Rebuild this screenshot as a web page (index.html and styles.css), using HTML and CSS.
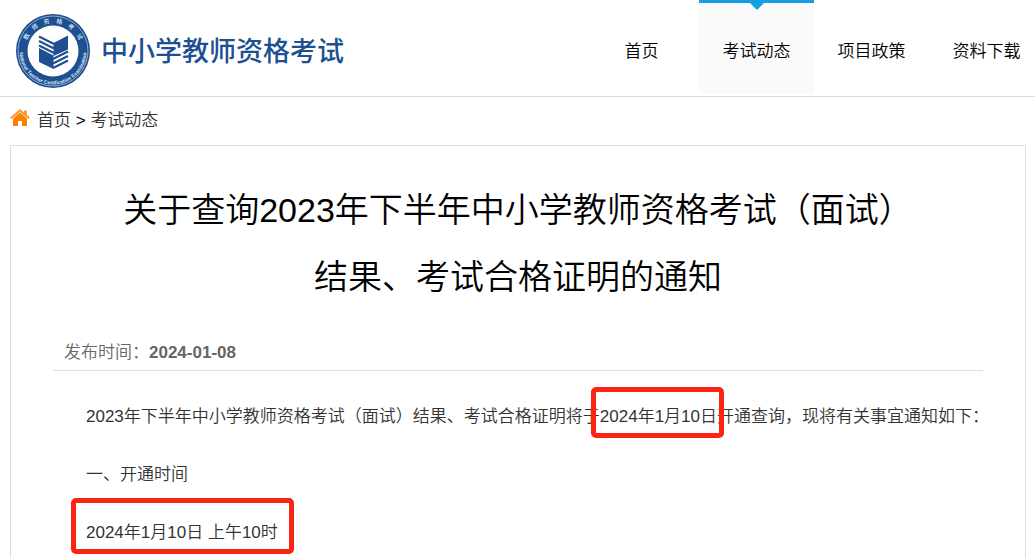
FILE: index.html
```html
<!DOCTYPE html>
<html lang="zh-CN">
<head>
    <meta charset="UTF-8">
    <meta name="viewport" content="width=device-width, initial-scale=1.0">
    <title>中小学教师资格考试</title>
    <link rel="stylesheet" href="styles.css">
</head>
<body>
    <header class="header">
        <a class="logo" href="#">
            <svg class="logo-mark" viewBox="0 0 76 76" aria-hidden="true">
                <defs>
                    <path id="arc-top" d="M10 38a28 28 0 0 1 56 0"/>
                    <path id="arc-bottom" d="M4.500 38a33.500 33.500 0 0 0 67 0"/>
                </defs>
                <circle cx="38" cy="38" r="37" fill="#1d4f91"/>
                <circle cx="38" cy="38" r="35" fill="none" stroke="#a9c0dc" stroke-width="0.8"/>
                <circle cx="38" cy="38" r="25.500" fill="#fff"/>
                <text class="ring-cn"><textPath href="#arc-top" startOffset="50%" text-anchor="middle">教&emsp;师&emsp;资&emsp;格&emsp;考&emsp;试</textPath></text>
                <text class="ring-en"><textPath href="#arc-bottom" startOffset="50%" text-anchor="middle">National Teacher Certification Examination</textPath></text>
                <path fill="#1d4f91" d="M38.500 30 53 22.500v14L38.500 43zM24 35l14.500 7.500V56L24 49z"/>
                <path fill="none" stroke="#1d4f91" stroke-width="2" d="M24 23.500l15 7.500M24 28l15 7.500M24 32.500l15 7.500M38 46l15-7.500M38 50.500l15-7.500M38 55l15-7.500"/>
            </svg>
            <span class="logo-text">中小学教师资格考试</span>
        </a>
        <nav class="nav">
            <a href="#">首页</a>
            <a href="#" class="active">考试动态</a>
            <a href="#">项目政策</a>
            <a href="#">资料下载</a>
        </nav>
    </header>

    <div class="crumbs">
        <svg class="home-icon" viewBox="0 0 20 18" aria-hidden="true">
            <path fill="#ff9a3c" d="M10 0 0 8.500l1.500 1.500L10 3l8.500 7L20 8.500 17 6V1.500h-3v2z"/>
            <path fill="#ff8000" d="M10 3.500 3 9.500V17h5v-5h4v5h5V9.500z"/>
        </svg>
        <div><a href="#">首页</a> &gt; <a href="#">考试动态</a></div>
    </div>

    <main class="article">
        <div class="article-head">
            <h1>关于查询2023年下半年中小学教师资格考试（面试）<br>结果、考试合格证明的通知</h1>
            <p class="date">发布时间：<strong>2024-01-08</strong></p>
        </div>
        <div class="article-body">
            <p>2023年下半年中小学教师资格考试（面试）结果、考试合格证明将于<span class="mark">2024年1月10日</span>开通查询，现将有关事宜通知如下：</p>
            <p>一、开通时间</p>
            <p><span class="mark mark-wide">2024年1月10日 上午10时</span></p>
        </div>
    </main>
</body>
</html>
```

FILE: styles.css
```css
* {
    box-sizing: border-box;
}
body {
    margin: 0;
    min-height: 100vh;
    display: flex;
    flex-direction: column;
    font-family: "Liberation Sans", "Noto Sans CJK SC", sans-serif;
    font-size: 17px;
    font-weight: 350;
    color: #000;
    background-color: #fff;
}
a {
    color: inherit;
    text-decoration: none;
}
h1, p {
    margin: 0;
}
strong {
    font-weight: 700;
}

/* header */
.header {
    display: flex;
    justify-content: space-between;
    height: 97px;
    border-bottom: 1px solid #ddd;
    overflow: hidden;
}
.logo {
    display: flex;
    align-items: center;
    gap: 10px;
    height: 102px;
    padding-left: 15px;
}
.logo-mark {
    width: 76px;
    height: 76px;
}
.ring-cn {
    font-size: 6px;
    font-weight: 500;
    fill: #dfe9f5;
}
.ring-en {
    font-size: 5px;
    font-weight: bold;
    fill: #dfe9f5;
}
.logo-text {
    padding-bottom: 4px;
    font-size: 27px;
    font-weight: 500;
    color: #1d4f91;
    white-space: nowrap;
}
.nav {
    display: flex;
    margin-right: -9px;
}
.nav a {
    position: relative;
    width: 115px;
    height: 94px;
    line-height: 98px;
    padding-top: 3px;
    text-align: center;
}
.nav .active {
    background-color: #fafafa;
    border-top: 3px solid #14a0e0;
    padding-top: 0;
}
.nav .active::after {
    content: "";
    position: absolute;
    top: 0;
    left: 50%;
    margin-left: -7px;
    border: 7px solid transparent;
    border-top-color: #14a0e0;
    border-bottom: none;
}

/* breadcrumb */
.crumbs {
    display: flex;
    align-items: center;
    gap: 7px;
    height: 48px;
    padding: 0 10px 6px;
}
.crumbs a {
    color: #333;
}
.home-icon {
    width: 20px;
    height: 18px;
}

/* article */
.article {
    flex: 1;
    margin: 0 9px 0 10px;
    border: 1px solid #ddd;
    border-bottom: none;
}
.article-head {
    margin: 0 42px;
    padding-top: 31px;
    border-bottom: 1px solid #ddd;
}
h1 {
    font-size: 34px;
    font-weight: 350;
    line-height: 67px;
    text-align: center;
}
.date {
    margin-top: 24px;
    padding-left: 11px;
    line-height: 35px;
    color: #666;
}
.article-body {
    padding: 31px 12px 0 75px;
    color: #333;
}
.article-body p {
    line-height: 29px;
    margin-bottom: 29px;
}
.article-body p:last-child {
    margin-bottom: 0;
}
.mark {
    position: relative;
}
.mark::after {
    content: "";
    position: absolute;
    top: -20px;
    bottom: -12px;
    left: -9px;
    right: -7px;
    border: 5px solid #fa2314;
    border-radius: 5px;
}
.mark-wide::after {
    top: -25px;
    left: -15px;
    right: -16px;
}
```
